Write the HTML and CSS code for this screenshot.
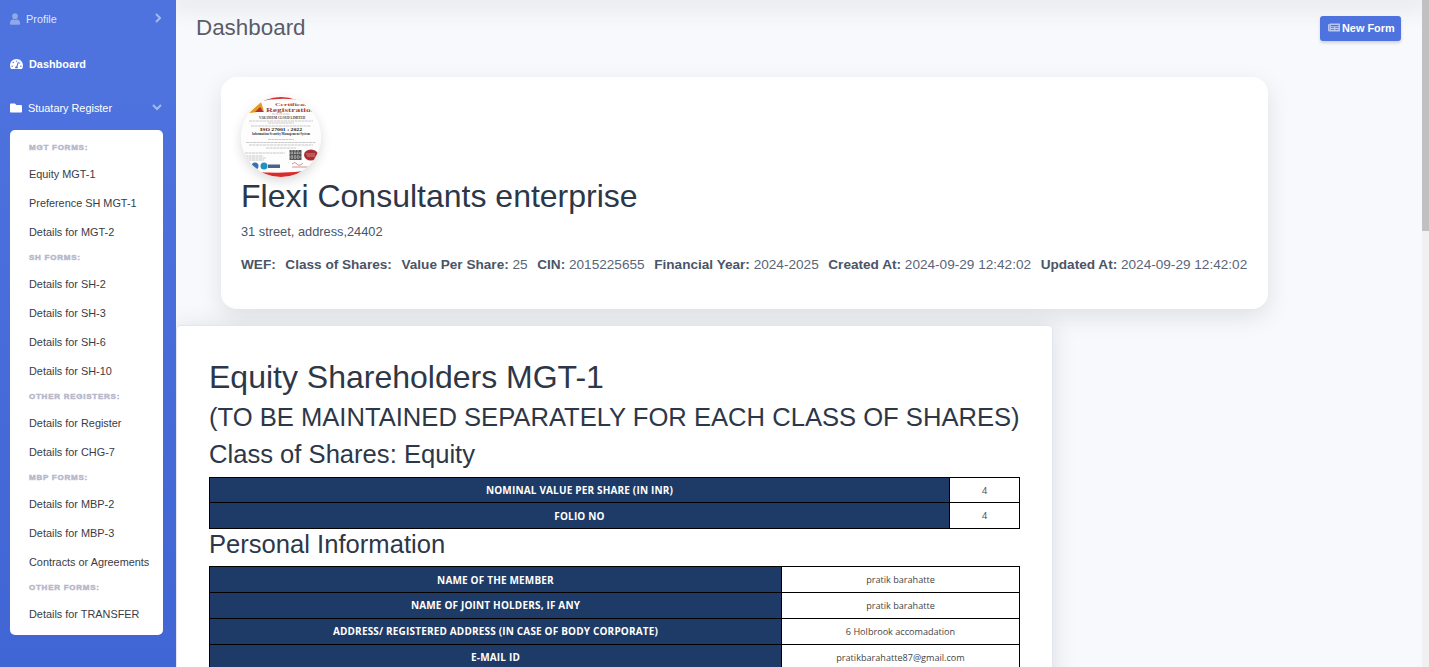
FILE: index.html
```
<!doctype html>
<html lang="en">
<head>
<meta charset="utf-8">
<title>Dashboard</title>
<link rel="stylesheet" href="styles.css">
</head>

<body>
<div class="wrapper">
	<div class="sidebar">
		<a class="nav-link profile">
			<svg class="icon-user" viewBox="0 0 448 512"><path d="M224 256a128 128 0 1 0 0-256 128 128 0 0 0 0 256zm90 20h-17a174 174 0 0 1-146 0h-17C60 276 0 348 0 422v42c0 27 21 48 48 48h352c27 0 48-21 48-48v-42c0-74-60-146-134-146z"/></svg>
			<span>Profile</span>
			<svg class="arrow" viewBox="0 0 8 10"><path d="M2 1l4 4-4 4"/></svg>
		</a>
		<a class="nav-link active">
			<svg class="icon-dash" viewBox="0 0 576 512"><path fill-rule="evenodd" d="M288 32C129 32 0 161 0 320c0 53 14 102 39 145 6 9 16 15 27 15h444c11 0 21-6 27-15 25-43 39-92 39-145C576 161 447 32 288 32zm0 64c15 0 27 10 31 23l-9 28c-6 8-13 13-22 13a32 32 0 0 1 0-64zM96 384a32 32 0 1 1 0-64 32 32 0 0 1 0 64zm48-160a32 32 0 1 1 0-64 32 32 0 0 1 0 64zm247-40l-61 184c13 12 22 29 22 48 0 12-3 23-9 32H233c-6-9-9-20-9-32 0-34 27-62 60-64l61-184c10-27 54-16 46 16zm14 57l17-50c4-4 6-7 10-7a32 32 0 1 1-27 57zm75 143a32 32 0 1 1 0-64 32 32 0 0 1 0 64z"/></svg>
			<span>Dashboard</span>
		</a>
		<a class="nav-link register">
			<svg class="icon-folder" viewBox="0 0 512 512"><path d="M464 128H272l-64-64H48C21 64 0 85 0 112v288c0 27 21 48 48 48h416c27 0 48-21 48-48V176c0-27-21-48-48-48z"/></svg>
			<span>Stuatary Register</span>
			<svg class="arrow down" viewBox="0 0 10 8"><path d="M1 2l4 4 4-4"/></svg>
		</a>
		<div class="collapse">
			<h6>MGT Forms:</h6>
			<a>Equity MGT-1</a>
			<a>Preference SH MGT-1</a>
			<a>Details for MGT-2</a>
			<h6>SH Forms:</h6>
			<a>Details for SH-2</a>
			<a>Details for SH-3</a>
			<a>Details for SH-6</a>
			<a>Details for SH-10</a>
			<h6>Other Registers:</h6>
			<a>Details for Register</a>
			<a>Details for CHG-7</a>
			<h6>MBP Forms:</h6>
			<a>Details for MBP-2</a>
			<a>Details for MBP-3</a>
			<a>Contracts or Agreements</a>
			<h6>Other Forms:</h6>
			<a>Details for TRANSFER</a>
		</div>
		<a class="nav-link next">
			<svg class="icon-folder" viewBox="0 0 512 512"><path d="M464 128H272l-64-64H48C21 64 0 85 0 112v288c0 27 21 48 48 48h416c27 0 48-21 48-48V176c0-27-21-48-48-48z"/></svg>
			<svg class="arrow" viewBox="0 0 8 10"><path d="M2 1l4 4-4 4"/></svg>
		</a>
	</div>

	<div class="content">
		<div class="topbar"></div>
		<div class="heading">
			<h1>Dashboard</h1>
			<a class="btn">
				<svg viewBox="0 0 576 512"><path fill-rule="evenodd" d="M552 64H112c-20 0-38 13-45 32H24c-13 0-24 11-24 24v272c0 31 25 56 56 56h496c13 0 24-11 24-24V88c0-13-11-24-24-24zM48 392V144h16v248c0 10-16 10-16 0zm88-256h368v56H136zm0 112h152v32H136zm216 0h152v32H352zM136 344h152v32H136zm216 0h152v32H352z"/></svg>
				<span>New Form</span>
			</a>
		</div>

		<div class="company">
			<svg class="logo" viewBox="0 0 80 80">
				<rect width="80" height="80" fill="#fdfdfd"/>
				<path d="M16 0h48v4Q40 -1 16 5z" fill="#d92b2b"/>
				<path d="M8 16L20 5l3 9-4-3-3 4z" fill="#e59a22"/>
				<path d="M14 15l5-5 4 5z" fill="#b4342c"/>
				<g font-family="Liberation Serif, serif">
					<text x="34" y="9" font-size="5" font-weight="bold" textLength="35" lengthAdjust="spacingAndGlyphs" fill="#a3483e">Certificate</text>
					<text x="25" y="15" font-size="6" font-weight="bold" textLength="50" lengthAdjust="spacingAndGlyphs" fill="#a3483e">Registration</text>
					<text x="18" y="21.500" font-size="3.500" font-weight="bold" textLength="46" lengthAdjust="spacingAndGlyphs" fill="#444">VARANIUM CLOUD LIMITED</text>
					<text x="19" y="34" font-size="5" font-weight="bold" textLength="42" lengthAdjust="spacingAndGlyphs" fill="#222">ISO 27001 : 2022</text>
					<text x="11" y="38" font-size="3" font-weight="bold" textLength="58" lengthAdjust="spacingAndGlyphs" fill="#333">Information Security Management System</text>
				</g>
				<path d="M31 17h18M8 24h64M27 26h26M10 29h60M27 42.500h26M5 45.500h70M8 48h64M25 51h30M4 56h40M4 59h18M4 61h21M4 63h19" stroke="#aaa" stroke-width=".6" stroke-dasharray="3 .5"/>
				<rect x="48.500" y="53" width="12" height="10" fill="#555"/>
				<path d="M51 53v10M54 53v10M57 53v10M48 56h13M48 60h13" stroke="#ddd" stroke-width=".8" stroke-dasharray="1.500 1"/>
				<ellipse cx="70" cy="58" rx="7" ry="5.500" fill="#a92e34"/>
				<path d="M65 57h9M66 59h8" stroke="#dc9a9c" stroke-width=".8"/>
				<path d="M51 67q3-3 5 0t6-1M51 70h18" stroke="#b64c4c" stroke-width=".6" fill="none"/>
				<circle cx="14" cy="69" r="3.500" fill="#3d6fae"/>
				<circle cx="23" cy="69" r="3.500" fill="#1e91c5"/>
				<rect x="27" y="67.500" width="12" height="3.500" fill="#4c6289"/>
				<path d="M10 74Q40 78 70 73v8H10z" fill="#d92b2b"/>
			</svg>
			<h1>Flexi Consultants enterprise</h1>
			<p class="address">31 street, address,24402</p>
			<div class="meta">
				<span><b>WEF:</b></span>
				<span><b>Class of Shares:</b></span>
				<span><b>Value Per Share:</b> 25</span>
				<span><b>CIN:</b> 2015225655</span>
				<span><b>Financial Year:</b> 2024-2025</span>
				<span><b>Created At:</b> 2024-09-29 12:42:02</span>
				<span><b>Updated At:</b> 2024-09-29 12:42:02</span>
			</div>
		</div>

		<div class="card">
			<h1>Equity Shareholders MGT-1</h1>
			<h2 class="note">(TO BE MAINTAINED SEPARATELY FOR EACH CLASS OF SHARES)</h2>
			<h2 class="class-name">Class of Shares: Equity</h2>
			<table class="shares">
				<tr><th>Nominal value per share (in INR)</th><td>4</td></tr>
				<tr><th>Folio No</th><td>4</td></tr>
			</table>
			<h2 class="personal">Personal Information</h2>
			<table class="info">
				<tr><th>Name of the member</th><td>pratik barahatte</td></tr>
				<tr><th>Name of joint holders, if any</th><td>pratik barahatte</td></tr>
				<tr><th>Address/ Registered address (in case of body corporate)</th><td>6 Holbrook accomadation</td></tr>
				<tr><th>E-mail ID</th><td>pratikbarahatte87@gmail.com</td></tr>
			</table>
		</div>
	</div>

	<div class="scrollbar"><div class="thumb"></div></div>
</div>
</body>
</html>
```

FILE: styles.css
```
*{
	margin: 0;
	padding: 0;
	box-sizing: border-box;
}
body{
	font-family: "Liberation Sans", Arial, sans-serif;
	background-color: #f8f9fc;
	overflow: hidden;
}
.wrapper{
	display: flex;
	height: 667px;
	overflow: hidden;
}
h1,h2{
	font-weight: 400;
	color: #2d3748;
	white-space: nowrap;
}

/* sidebar */
.sidebar{
	width: 176px;
	flex: none;
	background: linear-gradient(180deg, #4e73df 10%, #4065d4 100%);
	overflow: hidden;
}
.nav-link{
	display: flex;
	align-items: center;
	height: 44px;
	padding: 0 14px 0 10px;
	font-size: 10.88px;
	color: #fff;
}
.nav-link svg{
	flex: none;
	fill: currentColor;
}
.profile{
	height: 38px;
	margin-bottom: 4px;
	color: #dfe6fb;
}
.icon-user{
	width: 10px;
	height: 12px;
	margin-right: 6px;
	opacity: .45;
}
.active{
	font-weight: 700;
}
.icon-dash{
	width: 13px;
	height: 12px;
	margin-right: 6px;
}
.icon-folder{
	width: 12px;
	height: 12px;
	margin-right: 6px;
}
.nav-link .arrow{
	width: 8px;
	height: 10px;
	margin-left: auto;
	margin-bottom: 2px;
	fill: none;
	stroke: #a6b9ef;
	stroke-width: 2;
}
.nav-link .down{
	width: 10px;
	height: 8px;
}
.collapse{
	width: 153px;
	margin-left: 10px;
	padding: 6.5px 0;
	background-color: #fff;
	border-radius: 5px;
}
.collapse h6{
	height: 23px;
	padding-left: 19px;
	font-size: 8px;
	font-weight: 900;
	line-height: 22px;
	letter-spacing: .75px;
	text-transform: uppercase;
	color: #b7b9cc;
	-webkit-text-stroke: .5px #b7b9cc;
}
.collapse a{
	display: block;
	height: 29px;
	padding-left: 19px;
	font-size: 10.88px;
	line-height: 29px;
	color: #3a3b45;
	white-space: nowrap;
}
.next{
	margin-top: 15px;
	color: #a6b9ef;
}
.next .arrow{
	margin-bottom: 0;
}

/* content */
.content{
	flex: 1;
	min-width: 0;
	overflow: hidden;
}
.topbar{
	height: 0;
	box-shadow: 0 0 24px 6px rgba(58,59,69,.15);
}
.heading{
	display: flex;
	justify-content: space-between;
	align-items: center;
	height: 56px;
	padding: 0 21px 0 20px;
}
.heading h1{
	font-size: 22.4px;
	line-height: 26px;
	margin-bottom: 1px;
	color: #5a5c69;
}
.btn{
	display: flex;
	align-items: center;
	width: 81px;
	height: 25px;
	padding-left: 8px;
	padding-bottom: 1px;
	font-size: 10.88px;
	font-weight: 700;
	color: #fff;
	background-color: #4e73df;
	border-radius: 3px;
	box-shadow: 0 2px 3px rgba(58,59,69,.2);
	white-space: nowrap;
}
.btn svg{
	flex: none;
	width: 12px;
	height: 11px;
	margin-right: 2px;
	fill: #b8c7f2;
}
.company{
	width: 1047px;
	height: 232px;
	margin: 21px 0 0 45px;
	padding: 20px;
	background-color: #fff;
	border-radius: 16px;
	box-shadow: 0 8px 24px rgba(0,0,0,.1);
}
.logo{
	display: block;
	width: 80px;
	height: 80px;
	border-radius: 50%;
	box-shadow: 0 4px 12px rgba(0,0,0,.15);
}
.company h1{
	font-size: 32px;
	line-height: 38px;
}
.address{
	margin-top: 8px;
	font-size: 12.8px;
	line-height: 18px;
	color: #4a5568;
}
.meta{
	display: flex;
	gap: 9.6px;
	margin-top: 14px;
	font-size: 13.6px;
	line-height: 20px;
	color: #5a6578;
	white-space: nowrap;
}
.meta b{
	color: #4a5568;
}
.card{
	position: relative;
	width: 877px;
	height: 500px;
	margin-top: 16px;
	padding: 32px 32px 0 32px;
	background-color: #fff;
	border: 1px solid #e3e6f0;
	border-radius: 4px;
	box-shadow: 0 2px 23px rgba(58,59,69,.15);
}
.card h1{
	font-size: 32px;
	line-height: 38px;
}
.card h2{
	font-size: 25.6px;
	line-height: 31px;
}
.card .note{
	margin-top: 6px;
}
.card .class-name{
	margin-top: 6px;
	margin-bottom: 7px;
}
.card .personal{
	margin-bottom: 6px;
}
table{
	width: 811px;
	table-layout: fixed;
	border-collapse: collapse;
	font-family: "Open Sans", "Noto Sans", sans-serif;
	font-size: 10px;
	line-height: 14px;
	text-align: center;
}
th,td{
	height: 26px;
	border: 1px solid #000;
}
th{
	font-weight: 700;
	letter-spacing: .17px;
	color: #fff;
	text-transform: uppercase;
	background-color: #1e3a66;
}
td{
	padding-top: 1px;
	font-size: 9.1px;
	color: #444;
}
.shares td{
	width: 70px;
}
.shares th{
	width: 740px;
}
.shares tr:first-child th,.shares tr:first-child td{
	height: 25px;
}
.info th{
	width: 572px;
}
.info tr + tr th{
	padding-bottom: 2px;
}

/* page scrollbar */
.scrollbar{
	flex: none;
	width: 7px;
	background-color: #f1f1f1;
}
.thumb{
	height: 231px;
	background-color: #c1c1c1;
}
```
